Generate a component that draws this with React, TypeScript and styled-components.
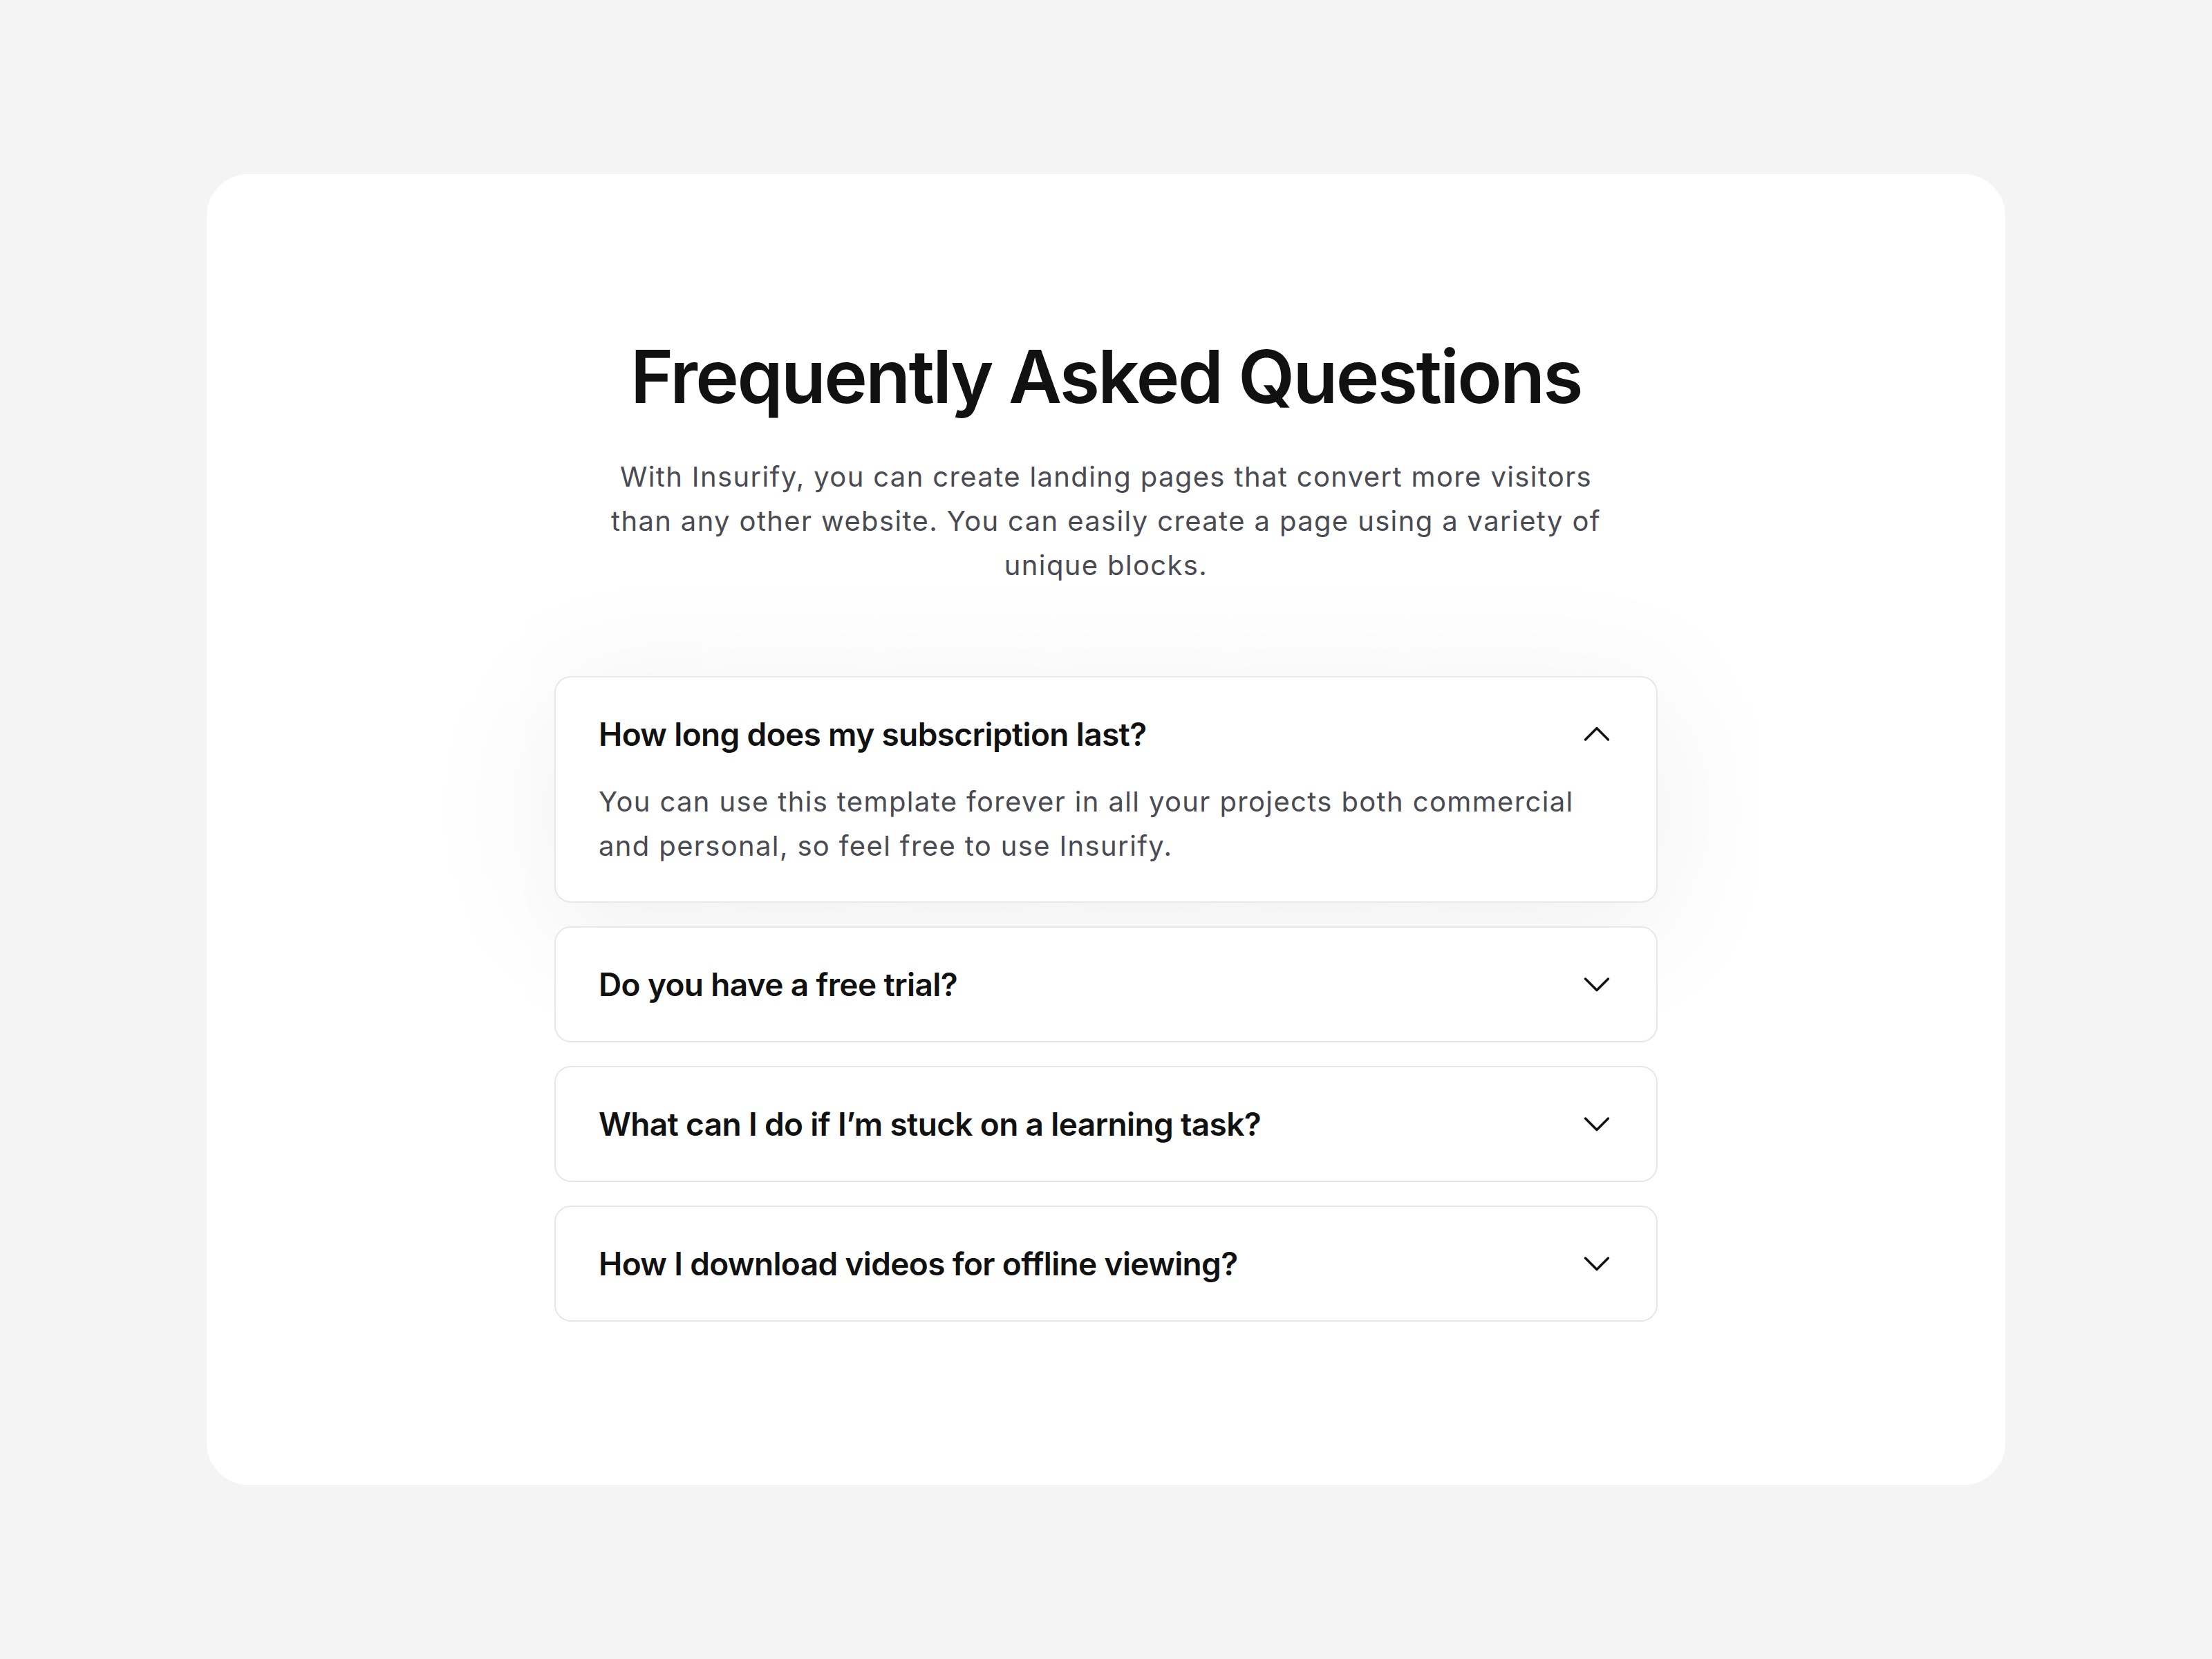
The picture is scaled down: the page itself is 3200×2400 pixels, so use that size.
import * as Accordion from '@radix-ui/react-accordion';
import styled, { createGlobalStyle } from 'styled-components';

const GlobalStyle = createGlobalStyle`
    html, body {
        margin: 0;
        padding: 0;
        background: #f4f4f4;
        font-family: Inter, "Noto Sans", sans-serif;
        -webkit-font-smoothing: antialiased;
    }
`;

const Page = styled.main`
    min-height: 100vh;
    display: flex;
    align-items: center;
    justify-content: center;
`;

const Card = styled.section`
    width: 2602px;
    box-sizing: border-box;
    background: #fff;
    border-radius: 60px;
    padding: 229px 0 236px;
    display: flex;
    flex-direction: column;
    align-items: center;
`;

const Title = styled.h2`
    margin: 0;
    font-size: 106px;
    line-height: 1.2;
    font-weight: 600;
    letter-spacing: -0.025em;
    color: #111;
`;

const Lead = styled.p`
    margin: 50px 0 0;
    width: 1440px;
    text-align: center;
    font-size: 40px;
    line-height: 64px;
    letter-spacing: 0.034em;
    color: #4a4a52;
`;

const List = styled(Accordion.Root)`
    margin-top: 128px;
    width: 1596px;
    display: flex;
    flex-direction: column;
    gap: 34px;
`;

const Item = styled(Accordion.Item)`
    background: #fff;
    border: 2px solid #e7e7eb;
    border-radius: 24px;
    transition: box-shadow 0.2s ease;

    &[data-state='open'] {
        box-shadow: 0 30px 200px rgba(0, 0, 0, 0.08);
    }
`;

const Header = styled(Accordion.Header)`
    margin: 0;
`;

const Trigger = styled(Accordion.Trigger)`
    all: unset;
    box-sizing: border-box;
    width: 100%;
    display: flex;
    align-items: center;
    justify-content: space-between;
    padding: 52px 66px 52px 62px;
    font-family: Inter, sans-serif;
    font-size: 46px;
    line-height: 60px;
    font-weight: 600;
    letter-spacing: -0.014em;
    color: #111;
    cursor: pointer;

    svg {
        transition: transform 0.2s ease;
    }

    &[data-state='open'] svg {
        transform: rotate(180deg);
    }
`;

const Panel = styled(Accordion.Content)`
    padding: 0 66px 48px 62px;
    margin-top: -16px;
    font-size: 40px;
    line-height: 64px;
    letter-spacing: 0.034em;
    color: #4a4a52;
`;

function Chevron() {
    return (
        <svg width="40" height="24" viewBox="0 0 40 24" fill="none">
            <path d="M3.5 4L20 20.5L36.5 4" stroke="#111" strokeWidth="3.5" strokeLinecap="round" strokeLinejoin="round" />
        </svg>
    );
}

const faqs = [
    {
        q: 'How long does my subscription last?',
        a: 'You can use this template forever in all your projects both commercial and personal, so feel free to use Insurify.',
    },
    {
        q: 'Do you have a free trial?',
        a: 'Yes, you can try every block for free for 14 days before choosing a plan.',
    },
    {
        q: 'What can I do if I’m stuck on a learning task?',
        a: 'Reach out to our support team any time and we will help you get unstuck.',
    },
    {
        q: 'How I download videos for offline viewing?',
        a: 'Open any lesson and use the download button next to the video player.',
    },
];

export default function App() {
    return (
        <>
            <GlobalStyle />
            <Page>
                <Card>
                    <Title>Frequently Asked Questions</Title>
                    <Lead>
                        With Insurify, you can create landing pages that convert more visitors than any other website. You can easily create a page using a variety of unique blocks.
                    </Lead>
                    <List type="single" collapsible defaultValue="faq-0">
                        {faqs.map((faq, i) => (
                            <Item key={faq.q} value={`faq-${i}`}>
                                <Header>
                                    <Trigger>
                                        <span>{faq.q}</span>
                                        <Chevron />
                                    </Trigger>
                                </Header>
                                <Panel>{faq.a}</Panel>
                            </Item>
                        ))}
                    </List>
                </Card>
            </Page>
        </>
    );
}
